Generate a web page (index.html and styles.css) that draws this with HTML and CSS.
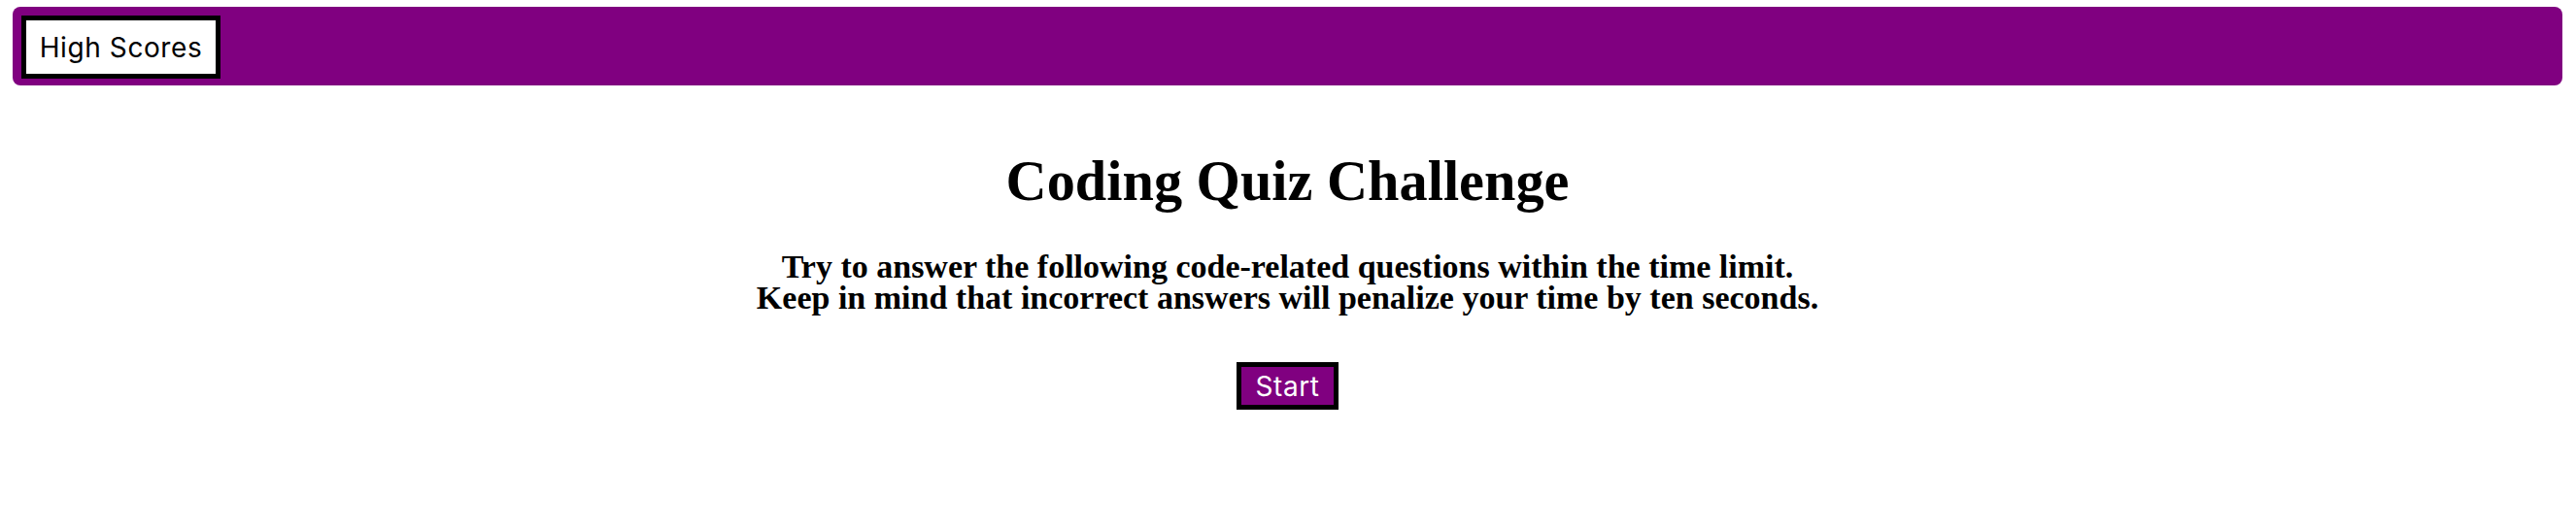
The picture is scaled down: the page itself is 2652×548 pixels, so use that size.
FILE: index.html
```html
<!DOCTYPE html>
<html lang="en">
<head>
<meta charset="utf-8">
<title>Coding Quiz Challenge</title>
<link rel="stylesheet" href="styles.css">
</head>
<body>
<header class="topbar">
  <button class="btn btn-scores">High Scores</button>
</header>
<main class="intro">
  <h1 class="title">Coding Quiz Challenge</h1>
  <h3 class="lead">Try to answer the following code-related questions within the time limit.<br>Keep in mind that incorrect answers will penalize your time by ten seconds.</h3>
  <button class="btn btn-start">Start</button>
</main>
</body>
</html>
```
FILE: styles.css
```css
html, body {
  margin: 0;
  padding: 0;
  background: #ffffff;
}
body {
  padding: 7px 14px 0 13px;
  font-family: "Liberation Serif", "Times New Roman", serif;
  color: #000;
}
.topbar {
  background: #800080;
  border-radius: 8px;
  height: 81px;
  box-sizing: border-box;
  padding: 9px 9px;
  display: flex;
  align-items: flex-start;
}
.btn {
  font-family: Inter, "Noto Sans", sans-serif;
  font-size: 28px;
  letter-spacing: 0.6px;
  border: 5px solid #000;
  box-sizing: border-box;
  padding: 0;
  margin: 0;
  display: flex;
  align-items: center;
  justify-content: center;
  cursor: pointer;
}
.btn-scores {
  width: 205px;
  height: 65px;
  background: #fff;
  color: #000;
}
.intro {
  display: flex;
  flex-direction: column;
  align-items: center;
  text-align: center;
}
.title {
  margin: 70px 0 0 0;
  font-size: 58.3px;
  line-height: 58px;
  font-weight: bold;
}
.lead {
  margin: 43px 0 0 0;
  font-size: 34px;
  line-height: 31.6px;
  font-weight: bold;
}
.btn-start {
  margin-top: 51px;
  width: 105px;
  height: 49px;
  background: #800080;
  color: #fff;
}
```
